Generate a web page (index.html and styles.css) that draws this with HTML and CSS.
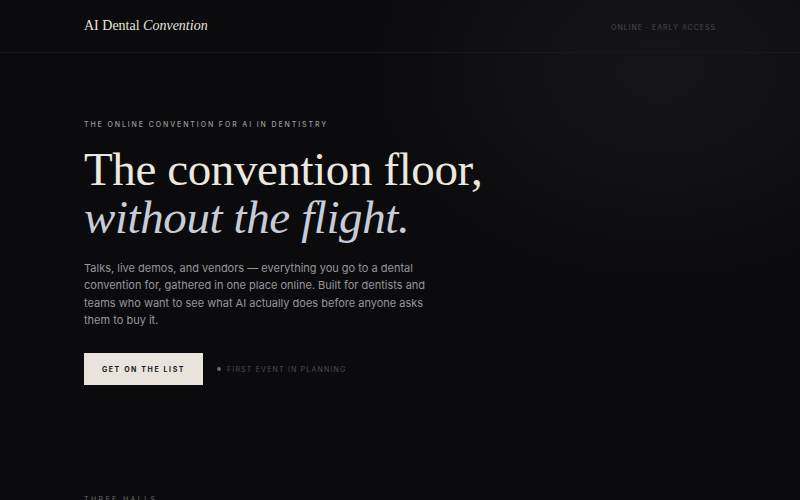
FILE: index.html
```html
<!DOCTYPE html>
<html lang="en">
<head>
<meta charset="utf-8">
<title>AI Dental Convention</title>
<link rel="stylesheet" href="styles.css">
</head>
<body>
<header class="site-header">
  <div class="wrap header-inner">
    <div class="logo">AI Dental <em>Convention</em></div>
    <div class="header-meta">ONLINE · EARLY ACCESS</div>
  </div>
</header>
<main class="hero">
  <div class="wrap">
    <p class="eyebrow">THE ONLINE CONVENTION FOR AI IN DENTISTRY</p>
    <h1 class="headline">The convention floor,<br><em>without the flight.</em></h1>
    <p class="lede">Talks, live demos, and vendors — everything you go to a dental convention for, gathered in one place online. Built for dentists and teams who want to see what AI actually does before anyone asks them to buy it.</p>
    <div class="actions">
      <a class="btn" href="#">GET ON THE LIST</a>
      <span class="status"><span class="dot"></span>FIRST EVENT IN PLANNING</span>
    </div>
  </div>
</main>
<section class="halls">
  <div class="wrap">
    <p class="section-label">THREE HALLS</p>
  </div>
</section>
</body>
</html>
```
FILE: styles.css
```css
* { box-sizing: border-box; }
html, body { margin: 0; padding: 0; }
body {
  background: #0b0b0d;
  color: #e8e4dc;
  font-family: "Inter", "Liberation Sans", sans-serif;
  min-height: 500px;
  overflow: hidden;
  background-image: radial-gradient(ellipse 300px 220px at 660px 70px, rgba(255,255,255,0.045), rgba(255,255,255,0) 100%);
}
.wrap {
  width: 632px;
  margin: 0 auto;
}
.site-header {
  height: 53px;
  border-bottom: 1px solid #18181b;
}
.header-inner {
  height: 52px;
  display: flex;
  align-items: center;
  justify-content: space-between;
}
.logo {
  font-family: "Liberation Serif", "DejaVu Serif", serif;
  font-size: 14px;
  color: #e8e4dc;
  padding-bottom: 1px;
}
.logo em { font-style: italic; }
.header-meta {
  font-size: 7px;
  letter-spacing: 1px;
  color: #4a4a4e;
  padding-top: 2px;
}
.hero .wrap {
  padding-top: 67px;
}
.eyebrow {
  margin: 0;
  font-size: 7px;
  letter-spacing: 1.9px;
  color: #9a9a9e;
  font-weight: 500;
}
.headline {
  margin: 16px 0 0;
  font-family: "Liberation Serif", "DejaVu Serif", serif;
  font-weight: 400;
  font-size: 47px;
  line-height: 48px;
  color: #ece8df;
  letter-spacing: -0.4px;
}
.headline em {
  color: #c8ccd6;
}
.lede {
  margin: 19px 0 0;
  max-width: 350px;
  font-size: 11px;
  line-height: 17.3px;
  color: #96969a;
}
.actions {
  margin-top: 24px;
  display: flex;
  align-items: center;
  gap: 14px;
}
.btn {
  display: inline-flex;
  align-items: center;
  justify-content: center;
  width: 119px;
  height: 32px;
  background: #e8e4dc;
  color: #1a1a1a;
  font-size: 7px;
  font-weight: 700;
  letter-spacing: 1.6px;
  text-decoration: none;
}
.status {
  display: inline-flex;
  align-items: center;
  gap: 6px;
  font-size: 7px;
  letter-spacing: 1.2px;
  color: #4e4e52;
}
.dot {
  width: 4px;
  height: 4px;
  border-radius: 50%;
  background: #6a6a6e;
}
.halls .wrap {
  padding-top: 110px;
}
.section-label {
  margin: 0;
  font-size: 7px;
  letter-spacing: 2.4px;
  color: #6a6a6e;
}
```
